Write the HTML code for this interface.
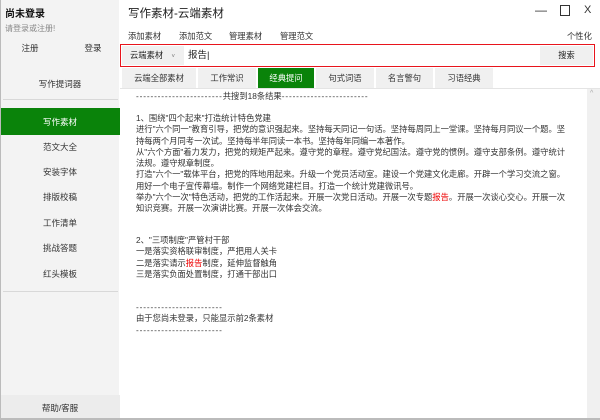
<!DOCTYPE html>
<html><head><meta charset="utf-8"><style>
*{margin:0;padding:0;box-sizing:border-box}
body{width:600px;height:420px;overflow:hidden;background:#fff;font-family:"Liberation Sans","Noto Sans CJK SC",sans-serif;color:#222;position:relative}
.abs{position:absolute;white-space:nowrap}
.side{position:absolute;left:0;top:0;width:119px;height:420px;background:#f3f3f3;border-left:1px solid #bbb}
.si{position:absolute;left:0;width:118px;text-align:center;font-size:8.5px;color:#333}
.tab{position:absolute;top:68px;height:20px;background:#f0f0f0;font-size:8.3px;text-align:center;line-height:20px;color:#333}
.c{position:absolute;left:136px;font-size:8.3px;line-height:11.3px;color:#333;white-space:nowrap}
.m{font-size:8.3px;color:#333;top:30px}
.r{color:#e00}
.d{letter-spacing:0.85px}
</style></head><body>
<div class="side">
<div class="abs" style="left:4px;top:5px;font-size:10px;font-weight:bold;color:#111">尚未登录</div>
<div class="abs" style="left:4px;top:23px;font-size:8px;color:#888">请登录或注册!</div>
<div class="si" style="top:42px;left:-30px">注册</div>
<div class="si" style="top:42px;left:33px">登录</div>
<div class="si" style="top:78px">写作提词器</div>
<div style="position:absolute;left:2px;top:99px;width:115px;height:1px;background:#d8d8d8"></div>
<div style="position:absolute;left:0;top:108px;width:119px;height:27px;background:#0a830a"></div>
<div class="si" style="top:116px;color:#fff">写作素材</div>
<div class="si" style="top:141px">范文大全</div>
<div class="si" style="top:166px">安装字体</div>
<div class="si" style="top:191px">排版校稿</div>
<div class="si" style="top:217px">工作清单</div>
<div class="si" style="top:242px">挑战答题</div>
<div class="si" style="top:268px">红头模板</div>
<div style="position:absolute;left:2px;top:291px;width:115px;height:1px;background:#d8d8d8"></div>
<div style="position:absolute;left:0;top:395px;width:119px;height:25px;background:#ececec"></div>
<div class="si" style="top:402px">帮助/客服</div>
</div>
<div class="abs" style="left:128px;top:5px;font-size:11.5px;color:#222">写作素材-云端素材</div>
<div class="abs" style="left:535px;top:3px;font-size:12px;color:#333">—</div>
<div class="abs" style="left:560px;top:5px;width:10px;height:11px;border:1.5px solid #333"></div>
<div class="abs" style="left:584px;top:4px;font-size:11px;color:#333">X</div>
<div class="abs m" style="left:128px">添加素材</div>
<div class="abs m" style="left:179px">添加范文</div>
<div class="abs m" style="left:229px">管理素材</div>
<div class="abs m" style="left:280px">管理范文</div>
<div class="abs m" style="left:567px">个性化</div>
<div class="abs" style="left:120px;top:44px;width:475px;height:23px;border:1.5px solid #e8141c"></div>
<div class="abs" style="left:122px;top:46px;width:62px;height:19px;background:#f0f0f0;font-size:8.3px;line-height:19px;padding-left:8px">云端素材 <span style="font-size:6px;color:#777;margin-left:6px">˅</span></div>
<div class="abs" style="left:188px;top:46px;font-size:9.5px;line-height:19px">报告|</div>
<div class="abs" style="left:540px;top:46px;width:53px;height:19px;background:#f0f0f0;font-size:8.3px;line-height:19px;text-align:center">搜索</div>
<div class="tab" style="left:122px;width:74px">云端全部素材</div>
<div class="tab" style="left:198px;width:58px">工作常识</div>
<div class="tab" style="left:258px;width:56px;background:#0a830a;color:#fff">经典提问</div>
<div class="tab" style="left:316px;width:58px">句式词语</div>
<div class="tab" style="left:376px;width:57px">名言警句</div>
<div class="tab" style="left:435px;width:58px">习语经典</div>
<div class="abs" style="left:120px;top:88px;width:480px;height:1px;background:#e4e4e4"></div>
<div class="abs" style="left:587px;top:89px;width:13px;height:331px;background:#f0f0f0"></div>
<div class="abs" style="left:590px;top:90px;font-size:7px;color:#aaa">^</div>
<div class="abs" style="left:0;top:418px;width:600px;height:2px;background:#bbb"></div>
<div class="c" style="top:91px"><span class="d">------------------------</span>共搜到18条结果<span class="d">------------------------</span></div>
<div class="c" style="top:113px">1、围绕"四个起来"打造统计特色党建<br>进行"六个同一"教育引导，把党的意识强起来。坚持每天同记一句话。坚持每周同上一堂课。坚持每月同议一个题。坚<br>持每两个月同考一次试。坚持每半年同读一本书。坚持每年同编一本著作。<br>从"六个方面"着力发力，把党的规矩严起来。遵守党的章程。遵守党纪国法。遵守党的惯例。遵守支部条例。遵守统计<br>法规。遵守规章制度。<br>打造"六个一"载体平台，把党的阵地用起来。升级一个党员活动室。建设一个党建文化走廊。开辟一个学习交流之窗。<br>用好一个电子宣传幕墙。制作一个网络党建栏目。打造一个统计党建微讯号。<br>举办"六个一次"特色活动，把党的工作活起来。开展一次党日活动。开展一次专题<span class="r">报告</span>。开展一次谈心交心。开展一次<br>知识竞赛。开展一次演讲比赛。开展一次体会交流。</div>
<div class="c" style="top:235px">2、"三项制度"严管村干部<br>一是落实资格联审制度，严把用人关卡<br>二是落实请示<span class="r">报告</span>制度，延伸监督触角<br>三是落实负面处置制度，打通干部出口</div>
<div class="c" style="top:302px"><span class="d">------------------------</span><br>由于您尚未登录，只能显示前2条素材<br><span class="d">------------------------</span></div>
</body></html>
